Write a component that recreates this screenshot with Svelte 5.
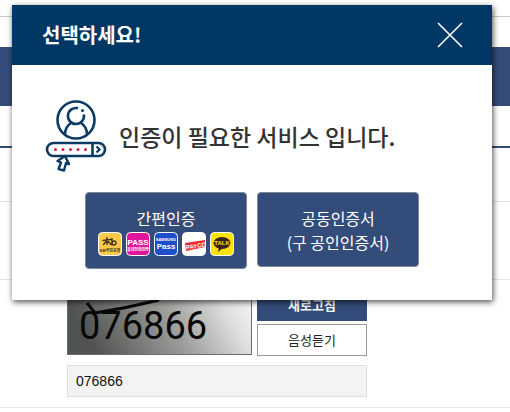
<script>
	const captcha = '076866';
	let answer = $state(captcha);
	let open = $state(true);
</script>

<div class="page">
	<div class="topbar"></div>
	<div class="gap"></div>
	<nav class="band" aria-label="메뉴"></nav>
	<div class="tabs"></div>
	<div class="row short"></div>
	<div class="row tall"></div>
	<form class="row captcha-row" onsubmit={(e) => e.preventDefault()}>
		<div class="captcha">
			<svg class="captcha-img" viewBox="0 0 185 66" role="img" aria-label="보안문자">
				<defs>
					<linearGradient id="shade" x1="0" y1="0.2" x2="1" y2="0">
						<stop offset="0" stop-color="#505350" />
						<stop offset="0.5" stop-color="#a0a19f" />
						<stop offset="0.8" stop-color="#dededc" />
						<stop offset="1" stop-color="#fbfbfa" />
					</linearGradient>
				</defs>
				<rect x="0.5" y="0.5" width="184" height="65" fill="url(#shade)" stroke="#66706a" />
				<text x="12" y="50">{captcha}</text>
				<path d="M20 14l8 10Q60 19 92 11" fill="none" stroke="#080808" stroke-width="3" />
			</svg>
			<div class="captcha-actions">
				<button type="button" class="refresh">새로고침</button>
				<button type="button" class="listen">음성듣기</button>
			</div>
		</div>
		<input class="answer" type="text" aria-label="보안문자 입력" bind:value={answer} />
	</form>
</div>

{#if open}
	<div class="modal" role="dialog" aria-labelledby="modal-title">
		<header>
			<h1 id="modal-title">선택하세요!</h1>
			<button type="button" class="close" aria-label="닫기" onclick={() => (open = false)}>
				<svg width="26" height="26" viewBox="0 0 26 26">
					<path d="M1 1l24 24M25 1L1 25" stroke="#fff" stroke-width="1.6" />
				</svg>
			</button>
		</header>

		<div class="body">
			<div class="message">
				<svg width="62" height="72" viewBox="0 0 62 72" fill="none" stroke="#0b3a63" stroke-width="2.6" aria-hidden="true">
					<circle cx="31" cy="20" r="18.5" />
					<path d="M33 8.3A8 8 0 1 0 38.8 14.5" />
					<path d="M20 34.5c0-6 2-9 6-11.5M42 34.5c0-6-2-9-6-11.5" />
					<circle cx="37.5" cy="10.5" r="1.5" fill="#0b3a63" stroke="none" />
					<rect x="2" y="43" width="58" height="13" rx="6.5" />
					<path d="M47.5 43v13" />
					<path d="M51.5 46.5l3 3-3 3" stroke-width="2.2" />
					<g fill="#d51f4a" stroke="none">
						{#each [10.5, 18, 25.5, 33, 40.5] as cx}
							<circle {cx} cy="49.5" r="1.5" />
						{/each}
					</g>
					<path d="M20 56l-7.5 5 3.5 1.5-2.5 6.5 5.5 1.5 2-7.5 3 1z" fill="#fff" stroke-width="2.4" stroke-linejoin="round" />
				</svg>
				<p>인증이 필요한 서비스 입니다.</p>
			</div>

			<div class="choices">
				<button type="button" class="choice">
					<span>간편인증</span>
					<span class="brands">
						<svg viewBox="0 0 24 24" role="img" aria-label="KB국민은행">
							<rect x="0.5" y="0.5" width="23" height="23" rx="4" fill="#fbca4d" stroke="#fff" />
							<g fill="none" stroke="#44351e" stroke-width="1.4" stroke-linecap="round">
								<path d="M5 8.5l8-1M9 5.5v7M9 8.5l-3.500 4M9 8.5l4 4M14 6.5v6" />
								<circle cx="16" cy="11" r="2" />
							</g>
							<text x="12" y="20" font-size="4" fill="#44351e">KB국민은행</text>
						</svg>
						<svg viewBox="0 0 24 24" role="img" aria-label="PASS">
							<rect x="0.5" y="0.5" width="23" height="23" rx="4" fill="#e0149b" stroke="#fff" />
							<text x="12" y="13" font-size="8" fill="#fff">PASS</text>
							<text x="12" y="19" font-size="4" fill="#fff">휴대전화인증</text>
						</svg>
						<svg viewBox="0 0 24 24" role="img" aria-label="Samsung Pass">
							<rect x="0.5" y="0.5" width="23" height="23" rx="4" fill="#1c4fc9" stroke="#fff" />
							<text x="12" y="9" font-size="4" fill="#fff">SAMSUNG</text>
							<text x="12" y="17" font-size="8" fill="#fff">Pass</text>
						</svg>
						<svg viewBox="0 0 24 24" role="img" aria-label="PAYCO">
							<rect x="0.5" y="0.5" width="23" height="23" rx="4" fill="#fff" stroke="#fff" />
							<path d="M3 11l20-3v7L4 19z" fill="#ee2a2e" />
							<text x="14" y="16" font-size="6" fill="#fff" transform="rotate(-9 14 14)">PAYCO</text>
						</svg>
						<svg viewBox="0 0 24 24" role="img" aria-label="카카오톡">
							<rect x="0.5" y="0.5" width="23" height="23" rx="4" fill="#fbe300" stroke="#fff" />
							<ellipse cx="12" cy="11" rx="8.5" ry="6" fill="#3b1f1c" />
							<path d="M9 15l-1 5 5-4z" fill="#3b1f1c" />
							<text x="12" y="13" font-size="6" fill="#fbe300">TALK</text>
						</svg>
					</span>
				</button>
				<button type="button" class="choice joint">공동인증서<br />(구 공인인증서)</button>
			</div>
		</div>
	</div>
{/if}

<style>
	:global(body) { margin: 0; background: #fff; }
	.page, .modal, button { font-family: "Noto Sans CJK KR", "Noto Sans", sans-serif; }
	button { padding: 0; border: 0; border-radius: 0; cursor: pointer; }

	.topbar { height: 16px; border-bottom: 1px solid #ccc; }
	.gap { height: 30px; }
	.band { height: 59px; background: #344c79; }
	.tabs { height: 40px; border-bottom: 2px solid #344c79; }
	.row { border-bottom: 1px solid #e6e6e6; }
	.short { height: 53px; }
	.tall { height: 77px; }

	.captcha-row { padding: 9px 0 10px 67px; }
	.captcha { display: flex; gap: 5px; }
	.captcha-img { width: 185px; height: 66px; }
	.captcha-img text { font-family: Roboto, "Liberation Sans", sans-serif; font-size: 38px; font-weight: 400; fill: #080808; }
	.captcha-actions { display: flex; flex-direction: column; gap: 3px; width: 110px; }
	.captcha-actions button { height: 32px; font-size: 13px; line-height: 20px; }
	.captcha-actions .refresh { background: #344c79; color: #fff; font-weight: 700; }
	.captcha-actions .listen { background: #fff; color: #222; border: 1px solid #999; }
	.answer {
		display: block; box-sizing: border-box; width: 300px; height: 32px; margin-top: 9px; padding: 0 8px;
		border: 1px solid #ddd; background: #f3f3f3; color: #111;
		font: 14px "Liberation Sans", Arial, sans-serif;
	}

	.modal {
		position: absolute; top: 5px; left: 12px; right: 18px;
		background: #fff; box-shadow: 1px 2px 6px rgba(0, 0, 0, 0.7);
	}
	header {
		display: flex; align-items: center; justify-content: space-between;
		height: 60px; padding: 0 29px 0 30px; background: #003764;
	}
	h1 { margin: 0; color: #fff; font-size: 20px; line-height: 30px; font-weight: 700; }
	.close { display: flex; background: none; }

	.body { padding: 35px 33px 31px; }
	.message { display: flex; align-items: center; gap: 12px; }
	.message p { margin: 0; color: #333; font-size: 23px; line-height: 32px; font-weight: 500; }
	.choices { display: flex; align-items: flex-start; justify-content: center; gap: 10px; margin-top: 20px; }
	.choice {
		display: flex; flex-direction: column; align-items: center; justify-content: center;
		box-sizing: border-box; width: 162px; height: 77px;
		border: 1px solid #7c8694; border-radius: 4px; background: #344c79;
		color: #fff; font-size: 16px; line-height: 24px;
	}
	.joint { height: 75px; }
	.brands { display: flex; gap: 4px; margin-top: 2px; }
	.brands svg { width: 24px; height: 24px; }
	.brands text { font-family: "Liberation Sans", "Noto Sans CJK KR", sans-serif; font-weight: 700; text-anchor: middle; }
</style>
